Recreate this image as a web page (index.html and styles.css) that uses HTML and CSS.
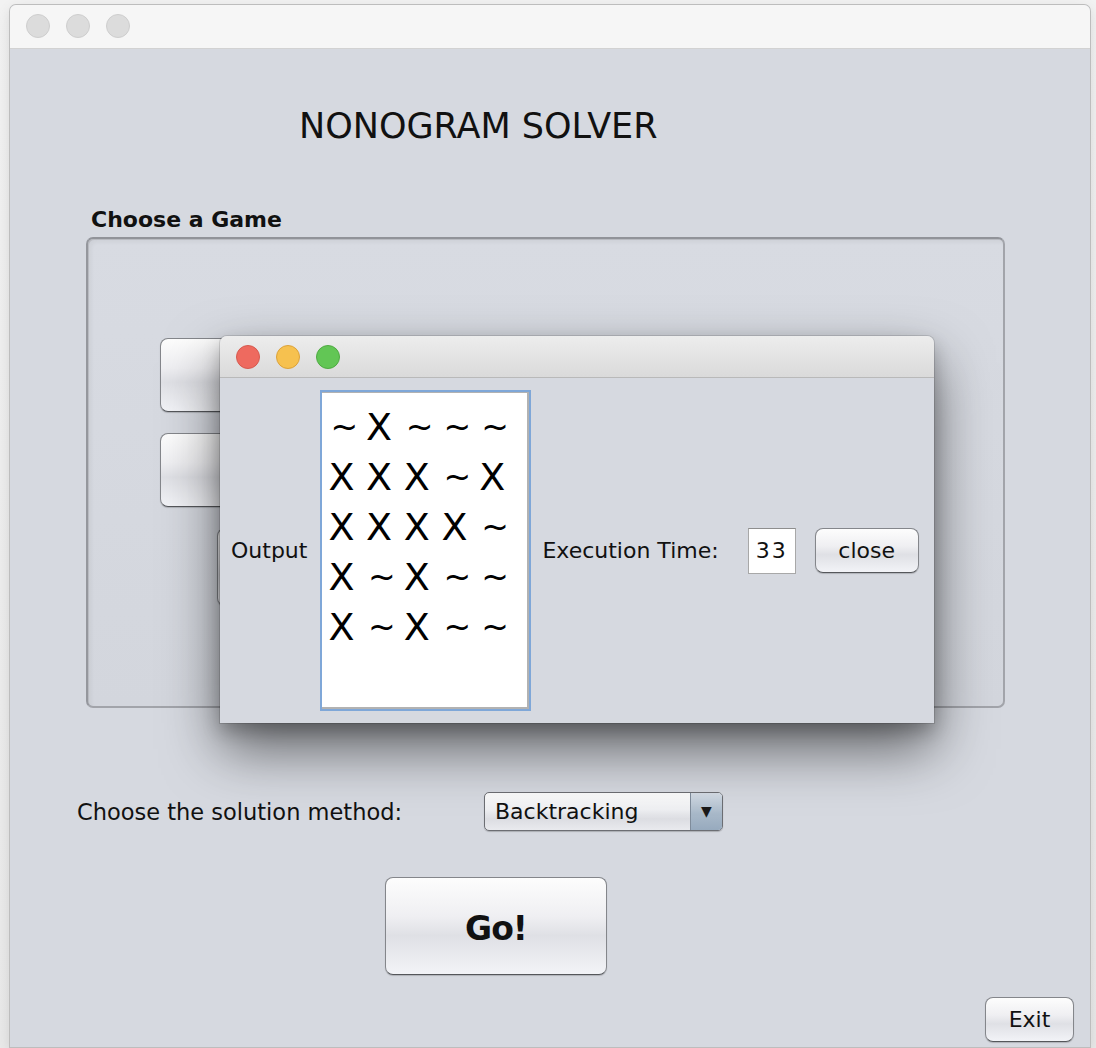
FILE: index.html
```html
<!DOCTYPE html>
<html>
<head>
<meta charset="utf-8">
<title>Nonogram Solver</title>
<link rel="stylesheet" href="styles.css">
</head>
<body>
<div class="win">
  <div class="titlebar">
    <span class="light inactive"></span>
    <span class="light inactive"></span>
    <span class="light inactive"></span>
  </div>
  <div class="content">
    <h1 class="app-title">NONOGRAM SOLVER</h1>
    <div class="group-label">Choose a Game</div>
    <div class="group-box">
      <button class="btn game-btn"></button>
      <button class="btn game-btn"></button>
      <button class="btn game-btn shifted"></button>
    </div>
    <div class="method-row">
      <span class="method-label">Choose the solution method:</span>
      <div class="combo">
        <span class="combo-text">Backtracking</span>
        <span class="combo-arrow">&#9660;</span>
      </div>
    </div>
    <div class="go-row"><button class="btn go">Go!</button></div>
    <div class="exit-row"><button class="btn exit">Exit</button></div>
  </div>

  <div class="dialog">
    <div class="dlg-titlebar">
      <span class="light red"></span>
      <span class="light yellow"></span>
      <span class="light green"></span>
    </div>
    <div class="dlg-body">
      <span class="dlg-label">Output</span>
      <div class="output">
        <div class="grid">
          <span class="t">~</span><span>X</span><span class="t">~</span><span class="t">~</span><span class="t">~</span>
          <span>X</span><span>X</span><span>X</span><span class="t">~</span><span>X</span>
          <span>X</span><span>X</span><span>X</span><span>X</span><span class="t">~</span>
          <span>X</span><span class="t">~</span><span>X</span><span class="t">~</span><span class="t">~</span>
          <span>X</span><span class="t">~</span><span>X</span><span class="t">~</span><span class="t">~</span>
        </div>
      </div>
      <span class="dlg-label exec">Execution Time:</span>
      <div class="field">33</div>
      <button class="btn close">close</button>
    </div>
  </div>
</div>
</body>
</html>
```

FILE: styles.css
```css
* { box-sizing: border-box; }

html, body {
  margin: 0;
  padding: 0;
}

body {
  width: 1096px;
  height: 1048px;
  overflow: hidden;
  background: linear-gradient(#f2f2f2, #e9e9e9);
  font-family: "DejaVu Sans", sans-serif;
  color: #111;
  padding-top: 5px;
  padding-left: 10px;
}

.win {
  position: relative;
  width: 1080px;
  height: 1042px;
  background: #d6d9e0;
  border-radius: 6px 6px 0 0;
  box-shadow: 0 0 0 1px #bdbdbd, 0 4px 14px rgba(0,0,0,0.12);
}

.titlebar {
  height: 44px;
  background: #f6f6f6;
  border-bottom: 1px solid #d2d2d2;
  border-radius: 6px 6px 0 0;
  display: flex;
  align-items: center;
  gap: 16px;
  padding-left: 16px;
  padding-bottom: 1px;
}

.light {
  width: 24px;
  height: 24px;
  border-radius: 50%;
  display: block;
}
.light.inactive { background: #dcdcdc; border: 1px solid #cecece; }
.light.red { background: #ee6a5f; border: 1px solid #d65a4f; }
.light.yellow { background: #f6c14f; border: 1px solid #dca23a; }
.light.green { background: #62c655; border: 1px solid #4faa42; }

.content {
  display: flex;
  flex-direction: column;
  align-items: flex-start;
}

.app-title {
  margin: 60px 0 0 289px;
  font-weight: normal;
  font-size: 35px;
  line-height: 1;
  color: #111;
}

.group-label {
  margin: 65px 0 0 81px;
  font-weight: bold;
  font-size: 22px;
  line-height: 1;
}

.group-box {
  margin: 6px 0 0 76px;
  width: 919px;
  height: 471px;
  border: 2px solid #a2a4aa;
  border-top-color: #919399;
  border-left-color: #95979d;
  border-radius: 7px;
  box-shadow: inset 1px 1px 0 #b9bbc1, inset 3px 3px 4px rgba(0,0,0,0.05);
  background: linear-gradient(#d8dbe2, #d3d6dd);
  display: flex;
  flex-direction: column;
  align-items: flex-start;
  padding: 99px 0 0 72px;
  gap: 21px;
}

.btn {
  font-family: "DejaVu Sans", sans-serif;
  color: #111;
  border: 1px solid #84868b;
  border-bottom-color: #55575b;
  border-radius: 8px;
  background: linear-gradient(#fdfdfd 0%, #efeff2 40%, #dfe0e5 60%, #f2f3f7 100%);
  box-shadow: 0 1px 1px rgba(0,0,0,0.18);
  padding: 0;
  cursor: default;
}

.game-btn {
  width: 340px;
  height: 74px;
}
.game-btn.shifted {
  margin-left: 57px;
  height: 78px;
}

.method-row {
  margin: 84px 0 0 67px;
  display: flex;
  align-items: center;
}

.method-label {
  font-size: 22.5px;
  width: 407px;
}

.combo {
  width: 239px;
  height: 39px;
  border: 1px solid #6c6e73;
  border-radius: 5px;
  background: linear-gradient(#fcfcfc, #eeeff2 45%, #dcdde2 70%, #e9eaee);
  box-shadow: 0 1px 1px rgba(0,0,0,0.2);
  display: flex;
  align-items: stretch;
  overflow: hidden;
}

.combo-text {
  flex: 1;
  font-size: 22px;
  line-height: 37px;
  padding-left: 10px;
}

.combo-arrow {
  width: 32px;
  border-left: 1px solid #7f8c9b;
  background: linear-gradient(#d5dde6, #a9b9c9 55%, #97aabe);
  font-size: 14px;
  line-height: 37px;
  text-align: center;
  color: #1a1a1a;
}

.go-row {
  margin: 46px 0 0 375px;
}

.go {
  width: 222px;
  height: 98px;
  font-size: 33px;
  font-weight: bold;
  letter-spacing: -1px;
  padding-top: 4px;
}

.exit-row {
  margin: 22px 0 0 975px;
}

.exit {
  width: 89px;
  height: 45px;
  font-size: 22px;
}

/* Dialog window over the main window */
.dialog {
  position: absolute;
  left: 210px;
  top: 331px;
  width: 714px;
  height: 387px;
  background: #d6d9e0;
  border-radius: 7px 7px 0 0;
  box-shadow: 0 0 0 1px rgba(0,0,0,0.12), 0 26px 56px rgba(0,0,0,0.55), 0 8px 18px rgba(0,0,0,0.22);
  display: flex;
  flex-direction: column;
}

.dlg-titlebar {
  height: 42px;
  background: linear-gradient(#ededed, #dadada);
  border-bottom: 1px solid #b9b9b9;
  border-radius: 7px 7px 0 0;
  display: flex;
  align-items: center;
  gap: 16px;
  padding-left: 16px;
}

.dlg-body {
  flex: 1;
  display: flex;
  align-items: center;
  padding-left: 11px;
}

.dlg-label {
  font-size: 22px;
  line-height: 1;
}

.output {
  margin-left: 13px;
  width: 211px;
  height: 321px;
  background: #fff;
  border: 2px solid #7fa7d8;
  box-shadow: inset 0 1px 0 #b2b2b2, inset -2px -2px 0 #b2b2b2;
  padding: 10px 0 0 6px;
}

.grid {
  display: grid;
  grid-template-columns: repeat(5, 37.7px);
  grid-auto-rows: 50px;
  font-size: 38px;
  line-height: 50px;
  color: #000;
}

.grid .t {
  font-size: 33px;
  padding-left: 2px;
}

.exec {
  margin-left: 11px;
}

.field {
  margin-left: 29px;
  width: 48px;
  height: 46px;
  background: #fff;
  border: 1px solid #a8a8a8;
  border-top-color: #8e8e8e;
  font-size: 22px;
  line-height: 44px;
  letter-spacing: 2px;
  padding-left: 7px;
}

.close {
  margin-left: 19px;
  width: 104px;
  height: 45px;
  font-size: 22px;
}
```
